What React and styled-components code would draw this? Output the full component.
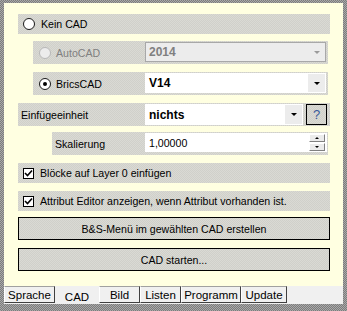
import React from "react";
import styled, { createGlobalStyle } from "styled-components";

const Global = createGlobalStyle`
  html, body { margin: 0; padding: 0; background: #fff; }
  * { box-sizing: border-box; }
`;

const dots = `repeating-conic-gradient(#d0d0ca 0 25%, #dadad4 0 50%) 0 0/2px 2px`;

const Frame = styled.div`
  width: 347px;
  height: 311px;
  padding: 3px 4px 7px 4px;
  display: flex;
  flex-direction: column;
  background: repeating-conic-gradient(#7c7c7c 0 25%, #a8a8a8 0 50%) 0 0/2px 2px;
  font-family: "Liberation Sans", Arial, sans-serif;
  font-size: 10.6px;
  color: #000;
`;

const Panel = styled.div`
  flex: 1;
  background: #ffffe1;
  padding: 11px 13px 0 14px;
  display: flex;
  flex-direction: column;
`;

const Row = styled.div`
  display: flex;
  align-items: center;
  background: ${dots};
  height: ${(p) => p.h || 23}px;
  margin: ${(p) => p.m || "0"};
`;

const Label = styled.div`
  display: flex;
  align-items: center;
  width: ${(p) => p.w}px;
  flex: none;
  height: 100%;
  padding-left: ${(p) => p.pl || 0}px;
  gap: ${(p) => p.gap || 6}px;
  color: ${(p) => (p.disabled ? "#808080" : "#000")};
  white-space: nowrap;
`;

const Radio = styled.span`
  width: 12px;
  height: 12px;
  flex: none;
  border-radius: 50%;
  border: 1px solid ${(p) => (p.disabled ? "#b8b8b8" : "#1a1a1a")};
  background: ${(p) => (p.disabled ? "#ececec" : "#fff")};
  display: flex;
  align-items: center;
  justify-content: center;
  &::after {
    content: "";
    display: ${(p) => (p.checked ? "block" : "none")};
    width: 4px;
    height: 4px;
    border-radius: 50%;
    background: #000;
  }
`;

const Combo = styled.div`
  flex: 1;
  align-self: stretch;
  display: flex;
  margin: ${(p) => p.m || "1px 2px 2px 0"};
  background: ${(p) => (p.disabled ? "#ececec" : "#fff")};
  border: 1px solid ${(p) => (p.disabled ? "#a8a8a8" : "transparent")};
`;

const ComboText = styled.div`
  flex: 1;
  display: flex;
  align-items: center;
  padding-left: 3px;
  font-size: ${(p) => (p.plain ? "10.6px" : "12px")};
  font-weight: ${(p) => (p.plain ? "normal" : "bold")};
  color: ${(p) => (p.disabled ? "#808080" : "#000")};
`;

const Arrow = styled.div`
  width: 17px;
  flex: none;
  display: flex;
  align-items: center;
  justify-content: center;
  background: ${(p) => (p.disabled ? "transparent" : "#ececec")};
  &::after {
    content: "";
    border-left: 3px solid transparent;
    border-right: 3px solid transparent;
    border-top: 3px solid ${(p) => (p.disabled ? "#9a9a9a" : "#000")};
  }
`;

const HelpButton = styled.div`
  width: 21px;
  height: 21px;
  flex: none;
  margin: 0 3px 0 3px;
  border: 1px solid #000;
  background: ${dots};
  display: flex;
  align-items: center;
  justify-content: center;
  color: #3a5a9a;
  font-size: 13px;
`;

const Spin = styled.div`
  width: 17px;
  flex: none;
  display: flex;
  flex-direction: column;
  justify-content: center;
  gap: 1px;
  padding-right: 1px;
`;

const SpinBtn = styled.div`
  height: 8px;
  background: #ececec;
  border: 1px solid #fff;
  border-right-color: #808080;
  border-bottom-color: #808080;
  display: flex;
  align-items: center;
  justify-content: center;
  &::after {
    content: "";
    border-left: 2px solid transparent;
    border-right: 2px solid transparent;
    ${(p) => (p.up ? "border-bottom: 2px solid #000;" : "border-top: 2px solid #000;")}
  }
`;

const Check = styled.span`
  width: 11px;
  height: 11px;
  flex: none;
  border: 1px solid #000;
  background: #fff;
  display: flex;
  align-items: center;
  justify-content: center;
`;

const Button = styled.div`
  height: 23px;
  margin: ${(p) => p.m || "0"};
  border: 1px solid #000;
  background: ${dots};
  display: flex;
  align-items: center;
  justify-content: center;
`;

const TabStrip = styled.div`
  height: 18px;
  background: #f0f0f0;
  display: flex;
  align-items: flex-start;
`;

const Tab = styled.div`
  width: ${(p) => p.w}px;
  height: ${(p) => (p.active ? 18 : 17)}px;
  flex: none;
  display: flex;
  align-items: center;
  justify-content: center;
  padding-top: ${(p) => (p.active ? 3 : 0)}px;
  border: ${(p) => (p.active ? "none" : "1px solid")};
  border-color: #a0a0a0 #404040 #404040 #fff;
  background: #f0f0f0;
  font-size: 11.5px;
`;

const CheckMark = () => (
  <svg width="9" height="9" viewBox="0 0 9 9">
    <path d="M1 4 L3.5 6.5 L8 1.5" fill="none" stroke="#000" strokeWidth="1.6" />
  </svg>
);

export default function App() {
  return (
    <>
      <Global />
      <Frame>
        <Panel>
          <Row h={20} m="0 0 7px 0">
            <Label w={120} pl={5}>
              <Radio />
              Kein CAD
            </Label>
          </Row>
          <Row m="0 2px 8px 15px">
            <Label w={112} pl={6} gap={5} disabled>
              <Radio disabled />
              AutoCAD
            </Label>
            <Combo disabled>
              <ComboText disabled>2014</ComboText>
              <Arrow disabled />
            </Combo>
          </Row>
          <Row m="0 2px 8px 15px">
            <Label w={112} pl={6} gap={5}>
              <Radio checked />
              BricsCAD
            </Label>
            <Combo>
              <ComboText>V14</ComboText>
              <Arrow />
            </Combo>
          </Row>
          <Row m="0 0 6px 0">
            <Label w={127} pl={3}>
              Einfügeeinheit
            </Label>
            <Combo m="1px 0 1px 0">
              <ComboText>nichts</ComboText>
              <Arrow />
            </Combo>
            <HelpButton>?</HelpButton>
          </Row>
          <Row m="0 2px 8px 34px">
            <Label w={93} pl={3}>
              Skalierung
            </Label>
            <Combo m="1px 1px 3px 0">
              <ComboText plain>1,00000</ComboText>
              <Spin>
                <SpinBtn up />
                <SpinBtn />
              </Spin>
            </Combo>
          </Row>
          <Row h={20} m="0 0 8px 0">
            <Label w={300} pl={5}>
              <Check>
                <CheckMark />
              </Check>
              Blöcke auf Layer 0 einfügen
            </Label>
          </Row>
          <Row h={20} m="0 0 6px 0">
            <Label w={300} pl={5}>
              <Check>
                <CheckMark />
              </Check>
              Attribut Editor anzeigen, wenn Attribut vorhanden ist.
            </Label>
          </Row>
          <Button m="0 0 8px 0">B&amp;S-Menü im gewählten CAD erstellen</Button>
          <Button>CAD starten...</Button>
        </Panel>
        <TabStrip>
          <Tab w={51}>Sprache</Tab>
          <Tab w={44} active>CAD</Tab>
          <Tab w={41}>Bild</Tab>
          <Tab w={41}>Listen</Tab>
          <Tab w={60}>Programm</Tab>
          <Tab w={46}>Update</Tab>
        </TabStrip>
      </Frame>
    </>
  );
}
